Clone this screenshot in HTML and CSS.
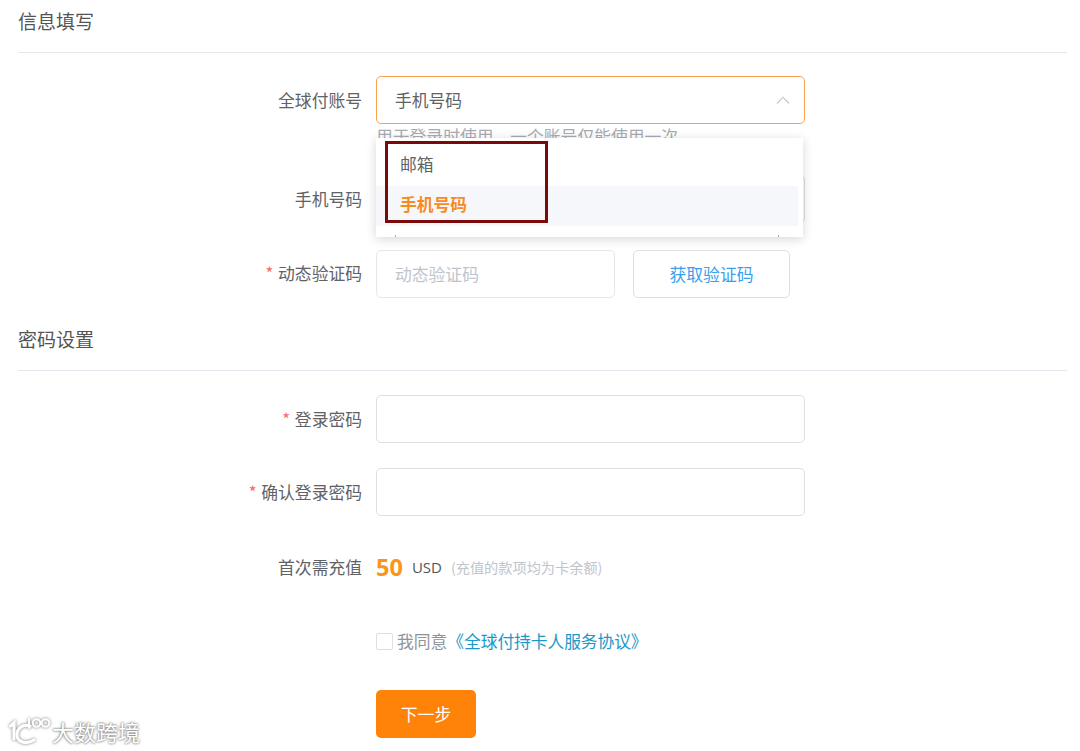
FILE: index.html
```html
<!DOCTYPE html>
<html lang="zh-CN">
<head>
<meta charset="utf-8">
<title>信息填写</title>
<link rel="stylesheet" href="styles.css">
</head>
<body>
<main class="page">
  <h2 class="section-title">信息填写</h2>
  <div class="row row-account">
    <label class="label">全球付账号</label>
    <div class="control">
      <div class="input select">
        <span>手机号码</span>
        <svg class="chevron" width="14" height="8" viewBox="0 0 14 8"><path d="M1 7.5 7 1.2l6 6.3" fill="none" stroke="#c0c4cc" stroke-width="1.1"/></svg>
      </div>
      <p class="hint">用于登录时使用，一个账号仅能使用一次</p>
      <div class="dropdown">
        <div class="option">邮箱</div>
        <div class="option active">手机号码</div>
        <i class="tick tick-left"></i>
        <i class="tick tick-right"></i>
      </div>
      <div class="highlight"></div>
    </div>
  </div>
  <div class="row row-phone">
    <label class="label">手机号码</label>
    <div class="control"><div class="input"></div></div>
  </div>
  <div class="row row-code">
    <label class="label"><em>*</em> 动态验证码</label>
    <div class="control code-group">
      <div class="input code-input placeholder">动态验证码</div>
      <button class="code-btn" type="button">获取验证码</button>
    </div>
  </div>
  <h2 class="section-title">密码设置</h2>
  <div class="row row-pass">
    <label class="label"><em>*</em> 登录密码</label>
    <div class="control"><div class="input"></div></div>
  </div>
  <div class="row row-confirm">
    <label class="label"><em>*</em> 确认登录密码</label>
    <div class="control"><div class="input"></div></div>
  </div>
  <div class="row row-amount">
    <label class="label">首次需充值</label>
    <div class="control amount">
      <strong>50</strong><span class="usd">USD</span><span class="note">(充值的款项均为卡余额)</span>
    </div>
  </div>
  <div class="row row-agree">
    <span class="label"></span>
    <div class="control agree">
      <span class="checkbox"></span><span class="agree-text">我同意</span><a class="agree-link">《全球付持卡人服务协议》</a>
    </div>
  </div>
  <div class="row">
    <span class="label"></span>
    <div class="control"><button class="next" type="button">下一步</button></div>
  </div>
</main>
<div class="watermark">
  <svg class="mark" width="42" height="30" viewBox="0 0 42 30">
    <g fill="none" stroke="#fff" stroke-linecap="round">
      <path d="M1.500 10 5 7v16" stroke-width="3.200"/>
      <path d="M21 10c-7-2-13 2-13 9 0 7 9 10 17 5" stroke-width="3.200"/>
      <path d="M20 3v9" stroke-width="2"/>
      <circle cx="27.500" cy="7" r="3.800" stroke-width="2"/>
      <circle cx="36.500" cy="7" r="3.800" stroke-width="2"/>
    </g>
  </svg>
  <span>大数跨境</span>
</div>
</body>
</html>
```
FILE: styles.css
```css
* { box-sizing: border-box; }
html, body { margin: 0; padding: 0; background: #fff; }
body {
  height: 751px;
  overflow: hidden;
  position: relative;
  font-family: "Noto Sans CJK SC", "Noto Sans", sans-serif;
  font-size: 16.8px;
  color: #606266;
}
.page { width: 1067px; padding-left: 18px; }
.section-title {
  margin: 0;
  height: 53px;
  padding-bottom: 10px;
  font-size: 19px;
  font-weight: 400;
  line-height: 41px;
  color: #555;
  border-bottom: 1px solid #e4e7ed;
}
.row { display: flex; gap: 14px; height: 48px; margin-bottom: 26px; }
.row-account { position: relative; z-index: 2; margin-top: 23px; margin-bottom: 51px; }
.row-phone { margin-bottom: 27px; }
.row-code { margin-bottom: 20px; }
.row-pass { margin-top: 24px; margin-bottom: 25px; }
.row-confirm { margin-bottom: 27px; }
.row-agree { margin-bottom: 25px; }
.label {
  flex: 0 0 344px;
  text-align: right;
  line-height: 48px;
  color: #606266;
}
.row-code .label { line-height: 46px; }
.label em { font-style: normal; color: #f56c6c; margin-right: 1px; }
.control { position: relative; flex: 0 0 429px; }
.input {
  height: 48px;
  padding: 0 18px;
  line-height: 46px;
  border: 1px solid #dcdfe6;
  border-radius: 5px;
  background: #fff;
}
.select {
  display: flex;
  align-items: center;
  justify-content: space-between;
  padding-right: 14px;
  border-color: #f9a24d;
}
.chevron { flex: none; }
.hint {
  margin: 0;
  color: #a8abb2;
  line-height: 20px;
  padding-top: 2px;
  white-space: nowrap;
}
.dropdown {
  position: absolute;
  left: 0;
  top: 62px;
  width: 427px;
  height: 99px;
  padding: 8px 5px 0 0;
  background: #fff;
  box-shadow: 0 2px 10px rgba(0, 0, 0, .16);
}
.option {
  height: 40px;
  padding-left: 24px;
  line-height: 37px;
  color: #606266;
}
.option.active { background: #f5f7fa; color: #f98a1f; font-weight: 700; }
.tick { position: absolute; bottom: 0; width: 1px; height: 2px; background: #aaa; }
.tick-left { left: 19px; }
.tick-right { right: 24px; }
.highlight {
  position: absolute;
  left: 9px;
  top: 65px;
  width: 163px;
  height: 82px;
  border: 3px solid #7a0a0a;
}
.code-group { display: flex; gap: 18px; }
.code-input { width: 239px; flex: none; border-color: #e4e7ed; }
.placeholder { color: #c0c4cc; }
.code-btn {
  width: 157px;
  height: 48px;
  border: 1px solid #dcdfe6;
  border-radius: 5px;
  background: #fff;
  color: #39a0ec;
  font: inherit;
  padding: 0;
}
.amount { display: flex; align-items: center; }
.amount strong { font-size: 23.5px; font-weight: 700; color: #fb9417; font-family: "Open Sans", sans-serif; }
.usd { margin-left: 9px; font-family: "Open Sans", sans-serif; font-size: 15px; color: #555; }
.note { margin-left: 9px; font-size: 14.2px; color: #c0c4cc; }
.agree { display: flex; align-items: center; }
.checkbox {
  width: 17px;
  height: 17px;
  border: 1px solid #dcdfe6;
  border-radius: 2px;
  margin-right: 4px;
  background: #fff;
}
.agree-text { color: #909399; }
.agree-link { color: #1c97c8; margin-left: 0; letter-spacing: -.1px; white-space: nowrap; }
.next {
  width: 100px;
  height: 48px;
  border: 0;
  border-radius: 5px;
  background: #ff8309;
  color: #fff;
  font: inherit;
  padding: 0;
}
.watermark {
  position: absolute;
  left: 9px;
  top: 716px;
  display: flex;
  align-items: center;
  gap: 1px;
  color: #fff;
  font-size: 22px;
  line-height: 30px;
  text-shadow: 0 0 2px #777, 0 0 3px #888;
}
.mark { filter: drop-shadow(0 0 1.5px #777); }
```
